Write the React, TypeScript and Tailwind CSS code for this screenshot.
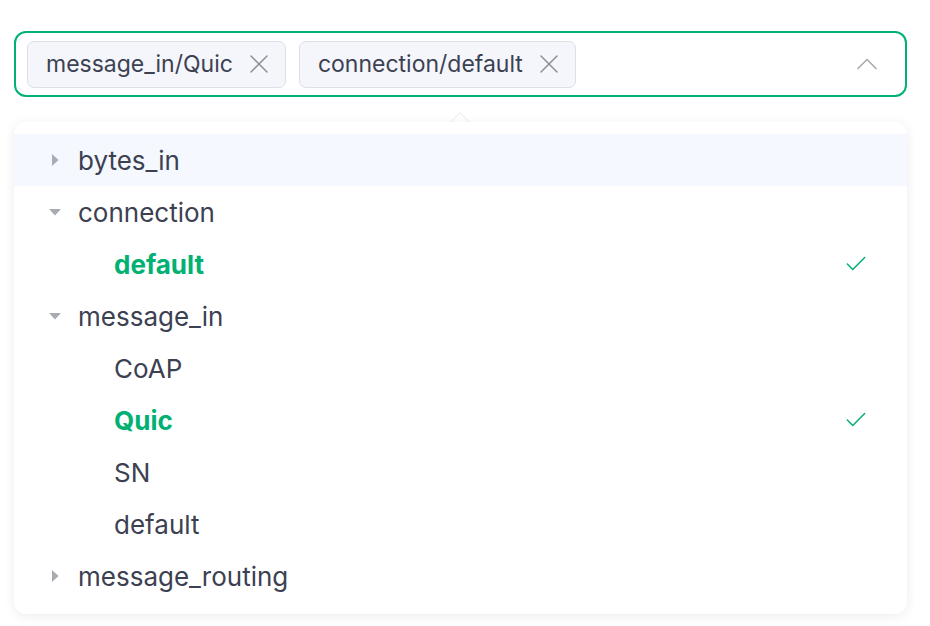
import { Check, ChevronUp, X } from "lucide-react";

type Row = { label: string; level: 0 | 1; caret?: "open" | "closed"; selected?: boolean; hover?: boolean };

const rows: Row[] = [
  { label: "bytes_in", level: 0, caret: "closed", hover: true },
  { label: "connection", level: 0, caret: "open" },
  { label: "default", level: 1, selected: true },
  { label: "message_in", level: 0, caret: "open" },
  { label: "CoAP", level: 1 },
  { label: "Quic", level: 1, selected: true },
  { label: "SN", level: 1 },
  { label: "default", level: 1 },
  { label: "message_routing", level: 0, caret: "closed" },
];

const Caret = ({ open }: { open: boolean }) => (
  <svg width="14" height="14" viewBox="0 0 14 14" className={open ? "" : "-rotate-90"}>
    <path d="M1 4h12L7 10.5z" fill="#a8abb2" />
  </svg>
);

const Tag = ({ text }: { text: string }) => (
  <div className="flex items-center h-[47px] pl-[18px] pr-[10px] gap-[10px] rounded-[7px] border border-[#dcdfe6] bg-[#f4f6fb] text-[#3c4152]">
    <span>{text}</span>
    <X size={32} strokeWidth={1.1} className="text-[#8b8e98]" />
  </div>
);

const App = () => {
  return (
    <div className="w-[930px] h-[626px] bg-white pl-[14px] pr-[23px] pt-[31px] text-[23px]" style={{ fontFamily: "Inter, Roboto, sans-serif" }}>
      <div className="flex items-center h-[66px] rounded-[12px] border-2 border-[#00b173] pl-[11px] pr-[20px] gap-[13px]">
        <Tag text="message_in/Quic" />
        <Tag text="connection/default" />
        <ChevronUp size={36} strokeWidth={1.1} className="ml-auto text-[#a8abb2]" />
      </div>
      <div className="relative mt-[25px]">
        <div className="absolute -top-[7px] left-[439px] w-[14px] h-[14px] rotate-45 bg-white border-l border-t border-[#eef0f4]" />
        <div className="relative rounded-[12px] bg-white py-[12px] shadow-[0_2px_12px_rgba(0,0,0,0.08)]">
          {rows.map((r, i) => (
            <div
              key={i}
              className={`flex items-center h-[52px] pr-[38px] text-[26px] ${r.hover ? "bg-[#f5f8fe]" : ""} ${r.level === 0 ? "pl-[34px]" : "pl-[100px]"}`}
            >
              {r.level === 0 && (
                <span className="w-[30px] flex items-center">
                  <Caret open={r.caret === "open"} />
                </span>
              )}
              <span className={r.selected ? "font-bold text-[#00b173]" : "text-[#3c4152]"}>{r.label}</span>
              {r.selected && <Check size={26} strokeWidth={1.4} className="ml-auto text-[#00b173]" />}
            </div>
          ))}
        </div>
      </div>
    </div>
  );
};

export default App;
